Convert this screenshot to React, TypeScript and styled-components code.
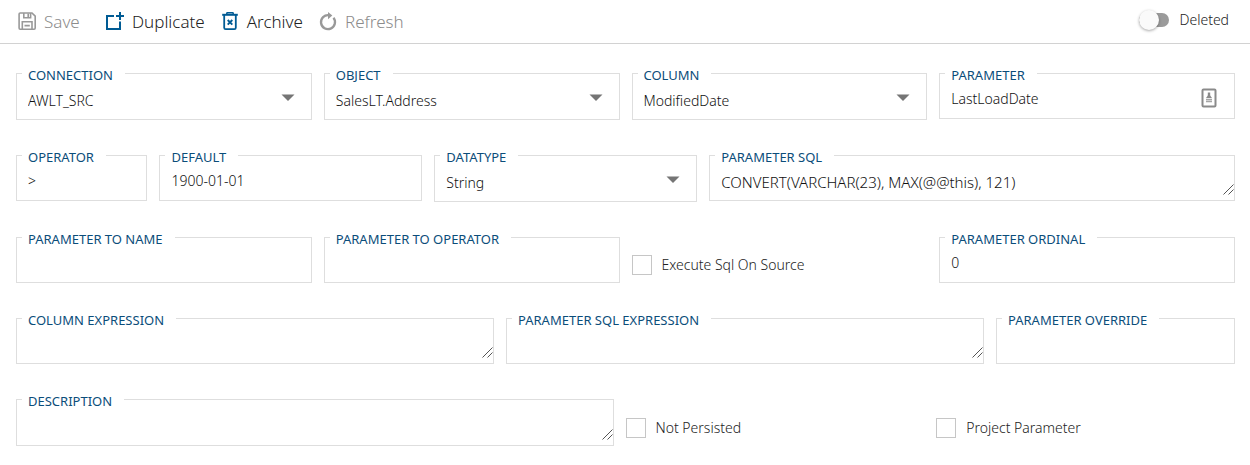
import React from "react";
import styled, { createGlobalStyle, css } from "styled-components";

const GlobalStyle = createGlobalStyle`
  *, *::before, *::after { box-sizing: border-box; }
  body {
    margin: 0;
    background: #fff;
    color: #222;
    font-family: "Noto Sans", "Open Sans", sans-serif;
    font-size: 14px;
  }
`;

const Toolbar = styled.header`
  display: flex;
  align-items: center;
  justify-content: space-between;
  height: 44px;
  padding: 0 21px 0 17px;
  border-bottom: 1px solid #d2d2d2;
`;

const Actions = styled.div`
  display: flex;
  gap: 15px;
`;

const ActionButton = styled.button<{ $wide?: boolean }>`
  display: flex;
  align-items: center;
  gap: 7px;
  min-width: ${(p) => (p.$wide ? "73px" : "0")};
  padding: 0;
  border: 0;
  background: none;
  color: #222;
  font: 300 17px/25px "Noto Sans", "Open Sans", sans-serif;
  cursor: pointer;

  svg { flex: none; color: #005b94; }
  &:disabled { color: #8c8c8c; cursor: default; }
  &:disabled svg { color: #999; }
`;

const Toggle = styled.label`
  display: flex;
  align-items: center;
  gap: 10px;
  padding-bottom: 4px;
  font-weight: 300;
  line-height: 20px;
  cursor: pointer;
`;

const Switch = styled.input`
  appearance: none;
  display: flex;
  align-items: center;
  width: 30px;
  height: 14px;
  margin: 0;
  border-radius: 7px;
  background: #9b9b9b;
  cursor: pointer;

  &::before {
    content: "";
    width: 20px;
    height: 20px;
    flex: none;
    border-radius: 50%;
    background: #fafafa;
    box-shadow: 0 1px 3px rgba(0, 0, 0, 0.35);
  }
  &:checked { justify-content: flex-end; background: #7fadc9; }
`;

const Form = styled.form`
  display: flex;
  flex-direction: column;
  gap: 35px;
  padding: 29px 15px 16px 16px;
`;

const Row = styled.div<{ $columns: string }>`
  display: grid;
  grid-template-columns: ${(p) => p.$columns};
  gap: 12px;
  align-items: start;
`;

const Frame = styled.div<{ $tall?: boolean }>`
  position: relative;
  display: flex;
  min-width: 0;
  height: ${(p) => (p.$tall ? "47px" : "46px")};
  border: 1px solid #dedede;
`;

const FieldLabel = styled.label`
  position: absolute;
  top: -8px;
  left: 5px;
  padding: 0 12px 0 6px;
  background: #fff;
  color: #0b4d7a;
  font-size: 13px;
  line-height: 18px;
  white-space: nowrap;
`;

const control = css`
  flex: 1;
  min-width: 0;
  margin: 0;
  border: 0;
  outline: 0;
  border-radius: 0;
  background: transparent;
  color: #111;
  font: 300 14px/20px "Noto Sans", "Open Sans", sans-serif;
`;

const TextInput = styled.input`
  ${control}
  padding: 6px 11px 0;
`;

const SelectInput = styled.select`
  ${control}
  appearance: none;
  padding: 9px 40px 0 11px;
`;

const TextArea = styled.textarea`
  ${control}
  height: 39px;
  padding: 16px 11px 0;
  font-size: 15px;
  resize: vertical;
  overflow: hidden;

  &::-webkit-resizer { background: transparent; }
`;

const Grip = styled.svg`
  position: absolute;
  right: 0;
  bottom: 5px;
  pointer-events: none;
`;

const Arrow = styled.svg`
  position: absolute;
  top: 20px;
  right: 16px;
  pointer-events: none;
`;

const FillIcon = styled.svg`
  flex: none;
  align-self: center;
  margin: 4px 17px 0 0;
`;

const Check = styled.label`
  display: flex;
  align-items: center;
  align-self: end;
  gap: 10px;
  padding-bottom: 8px;
  font-weight: 300;
  line-height: 20px;
  cursor: pointer;
`;

const CheckBox = styled.input`
  appearance: none;
  width: 20px;
  height: 20px;
  margin: 0;
  border: 1px solid #c6c6c6;
  background: #fff;
  cursor: pointer;

  &:checked { background: #005b94; }
`;

type FieldProps = { id: string; label: string; value?: string; tall?: boolean };

const Input = ({ id, label, value = "", children }: FieldProps & { children?: React.ReactNode }) => (
  <Frame>
    <FieldLabel htmlFor={id}>{label}</FieldLabel>
    <TextInput id={id} type="text" defaultValue={value} />
    {children}
  </Frame>
);

const Select = ({ id, label, value }: FieldProps) => (
  <Frame $tall>
    <FieldLabel htmlFor={id}>{label}</FieldLabel>
    <SelectInput id={id} defaultValue={value}>
      <option>{value}</option>
    </SelectInput>
    <Arrow width="14" height="7" viewBox="0 0 14 7" aria-hidden="true">
      <path d="M0.5 0.5h13L7 7z" fill="#757575" />
    </Arrow>
  </Frame>
);

const Area = ({ id, label, value = "", tall }: FieldProps) => (
  <Frame $tall={tall}>
    <FieldLabel htmlFor={id}>{label}</FieldLabel>
    <TextArea id={id} defaultValue={value} />
    <Grip width="11" height="11" viewBox="0 0 11 11" aria-hidden="true">
      <path d="M0.5 10.5l10-10M5.5 10.5l5-5" stroke="#555" />
    </Grip>
  </Frame>
);

const CheckField = ({ label }: { label: string }) => (
  <Check>
    <CheckBox type="checkbox" />
    {label}
  </Check>
);

const SaveIcon = () => (
  <svg width="20" height="21" viewBox="0 0 20 21" fill="none" stroke="currentColor" strokeWidth="1.6" aria-hidden="true">
    <path d="M3.2 2H15l3.2 3.2v11.9q0 1.100-1.100 1.100H3.200q-1.100 0-1.100-1.100V3.100Q2.100 2 3.200 2z" />
    <path d="M6.800 2v4.700h6.800V2M11.200 2.500v3.500M5.300 18v-7.200h9.700V18M7.500 14.600h5.300" />
  </svg>
);

const DuplicateIcon = () => (
  <svg width="20" height="21" viewBox="0 0 20 21" fill="none" stroke="currentColor" strokeWidth="2" aria-hidden="true">
    <path d="M9 5H2v13h13V10.500" />
    <path d="M15 1v8M11 5h8" />
  </svg>
);

const ArchiveIcon = () => (
  <svg width="20" height="21" viewBox="0 0 20 21" fill="none" stroke="currentColor" aria-hidden="true">
    <path d="M2.200 3.800h15.600" strokeWidth="2" />
    <path d="M6.800 3.200V2.300q0-.6.600-.6h5.200q.6 0 .6.600v.9" strokeWidth="1.500" />
    <path d="M4.200 4v12.700q0 1.500 1.500 1.500h8.600q1.500 0 1.500-1.500V4" strokeWidth="1.800" />
    <path d="M7.700 9l4.600 4.600M12.300 9l-4.600 4.600" strokeWidth="1.900" />
  </svg>
);

const RefreshIcon = () => (
  <svg width="20" height="21" viewBox="0 0 20 21" fill="none" aria-hidden="true">
    <path d="M11 4.200A7 7 0 1 0 15.500 6.800" stroke="currentColor" strokeWidth="2.300" />
    <path d="M10 1v7.200l4.300-3.700z" fill="currentColor" />
  </svg>
);

export default function App() {
  return (
    <>
      <GlobalStyle />
      <Toolbar>
        <Actions>
          <ActionButton type="button" disabled $wide><SaveIcon />Save</ActionButton>
          <ActionButton type="button"><DuplicateIcon />Duplicate</ActionButton>
          <ActionButton type="button"><ArchiveIcon />Archive</ActionButton>
          <ActionButton type="button" disabled><RefreshIcon />Refresh</ActionButton>
        </Actions>
        <Toggle>
          <Switch type="checkbox" role="switch" />
          Deleted
        </Toggle>
      </Toolbar>
      <Form>
        <Row $columns="repeat(4, 1fr)">
          <Select id="connection" label="CONNECTION" value="AWLT_SRC" />
          <Select id="object" label="OBJECT" value="SalesLT.Address" />
          <Select id="column" label="COLUMN" value="ModifiedDate" />
          <Input id="parameter" label="PARAMETER" value="LastLoadDate">
            <FillIcon width="16" height="20" viewBox="0 0 16 20" aria-hidden="true">
              <rect x="1.5" y="1.5" width="13" height="17" rx="1" fill="#fff" stroke="#8a8a8a" strokeWidth="2" />
              <path d="M8 4.5v4" stroke="#8a8a8a" strokeWidth="2.4" />
              <path d="M5 10h6l-3-4z" fill="#8a8a8a" />
              <path d="M5 11.5h6M5 13.5h6" stroke="#a5a5a5" strokeWidth="1.5" />
            </FillIcon>
          </Input>
        </Row>
        <Row $columns="1fr 2fr 2fr 4fr">
          <Input id="operator" label="OPERATOR" value=">" />
          <Input id="default" label="DEFAULT" value="1900-01-01" />
          <Select id="datatype" label="DATATYPE" value="String" />
          <Area id="parameter-sql" label="PARAMETER SQL" value="CONVERT(VARCHAR(23), MAX(@@this), 121)" />
        </Row>
        <Row $columns="repeat(4, 1fr)">
          <Input id="parameter-to-name" label="PARAMETER TO NAME" />
          <Input id="parameter-to-operator" label="PARAMETER TO OPERATOR" />
          <CheckField label="Execute Sql On Source" />
          <Input id="parameter-ordinal" label="PARAMETER ORDINAL" value="0" />
        </Row>
        <Row $columns="2fr 2fr 1fr">
          <Area id="column-expression" label="COLUMN EXPRESSION" />
          <Area id="parameter-sql-expression" label="PARAMETER SQL EXPRESSION" />
          <Input id="parameter-override" label="PARAMETER OVERRIDE" />
        </Row>
        <Row $columns="2fr 1fr 1fr">
          <Area id="description" label="DESCRIPTION" tall />
          <CheckField label="Not Persisted" />
          <CheckField label="Project Parameter" />
        </Row>
      </Form>
    </>
  );
}
